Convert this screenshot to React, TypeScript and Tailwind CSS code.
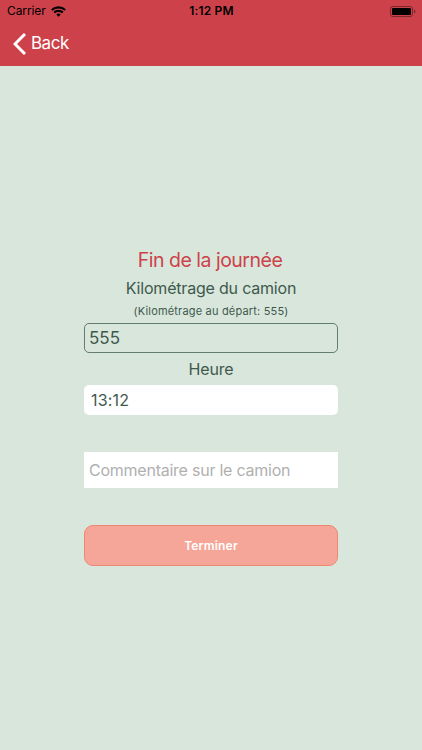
export default function App() {
  return (
    <main className="flex h-[750px] w-[422px] flex-col bg-[#d8e6dc] font-['Inter',sans-serif] text-[#3f594c]">
      <header className="h-[66px] bg-[#cd424a]">
        <div className="grid h-[22px] grid-cols-3 items-center pl-[7px] pr-[6px] text-black">
          <div className="flex items-center gap-[5px] text-[12px] tracking-[-0.1px]">
            <span>Carrier</span>
            <svg width="15" height="11" viewBox="0 0 15 11" fill="none" stroke="currentColor" strokeWidth="2.1">
              <path d="M.8 4.1a9.5 9.5 0 0 1 13.4 0M3.2 6.6a6.1 6.1 0 0 1 8.6 0" />
              <path d="m7.5 10.7-2.2-2.2a3.1 3.1 0 0 1 4.4 0Z" fill="currentColor" stroke="none" />
            </svg>
          </div>
          <div className="text-center text-[12px] font-semibold tracking-[0.2px]">1:12 PM</div>
          <svg className="justify-self-end" width="26" height="11" viewBox="0 0 26 11">
            <rect x=".5" y=".5" width="22" height="10" rx="2.3" fill="none" stroke="currentColor" strokeOpacity=".4" />
            <rect x="2" y="2" width="19" height="7" rx="1" fill="currentColor" />
            <path d="M24 3.5c2 .7 2 3.3 0 4Z" fill="currentColor" fillOpacity=".4" />
          </svg>
        </div>
        <button className="ml-[13px] flex h-[43px] items-center gap-[5px] text-[17px] tracking-[-0.5px] text-white">
          <svg width="13" height="22" viewBox="0 0 13 22" fill="none" stroke="currentColor" strokeWidth="3"><path d="M12 1 2 11l10 10" /></svg>
          Back
        </button>
      </header>
      <section className="mx-auto flex w-[254px] flex-col pt-[180px] text-center">
        <h1 className="h-[28px] pr-[2px] text-[19.5px] leading-[28px] tracking-[-0.5px] text-[#cd424a]">Fin de la journée</h1>
        <label className="h-[28px] text-[16px] leading-[28px] tracking-[-0.2px]">Kilométrage du camion</label>
        <p className="h-[21px] text-[11px] leading-[18px] tracking-[0.18px]">(Kilométrage au départ: 555)</p>
        <div className="h-[30px] rounded-[5px] border border-[#3f594c]/75 pl-[4px] text-left text-[17px] leading-[29px]">555</div>
        <label className="h-[32px] text-[16px] leading-[32px] tracking-[-0.2px]">Heure</label>
        <div className="h-[30px] rounded-[5px] bg-white pl-[7px] text-left text-[16px] leading-[31px] tracking-[0.2px]">13:12</div>
        <div className="mt-[37px] h-[36px] bg-white pl-[5px] text-left text-[16px] leading-[37px] tracking-[-0.24px] text-[#b0b0b0]">Commentaire sur le camion</div>
        <button className="mt-[37px] h-[41px] rounded-[9px] border border-[#ee8873] bg-[#f5a699] text-[12px] font-semibold tracking-[0.2px] text-white">Terminer</button>
      </section>
    </main>
  );
}
